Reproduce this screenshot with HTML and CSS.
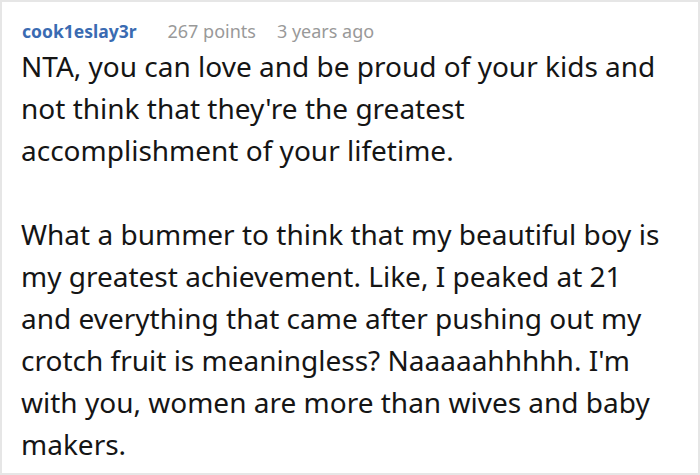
FILE: index.html
```html
<!DOCTYPE html>
<html>
<head>
<meta charset="utf-8">
<link rel="stylesheet" href="styles.css">
</head>
<body>
<div class="comment">
  <div class="meta">
    <span class="author">cook1eslay3r</span>
    <span class="points">267 points</span>
    <span class="time">3 years ago</span>
  </div>
  <div class="body">
    <p>NTA, you can love and be proud of your kids and not think that they're the greatest accomplishment of your lifetime.</p>
    <p>What a bummer to think that my beautiful boy is my greatest achievement. Like, I peaked at 21 and everything that came after pushing out my crotch fruit is meaningless? Naaaaahhhhh. I'm with you, women are more than wives and baby makers.</p>
  </div>
</div>
</body>
</html>
```

FILE: styles.css
```css
html, body {
  margin: 0;
  padding: 0;
  background: #ffffff;
}
.comment {
  width: 700px;
  height: 475px;
  box-sizing: border-box;
  border: 2px solid #e6e6e6;
  padding: 17px 0 0 19px;
  font-family: "Noto Sans", "Open Sans", sans-serif;
  overflow: hidden;
}
.meta {
  display: flex;
  align-items: baseline;
  line-height: 24px;
  padding-left: 1px;
}
.author {
  color: #3a6bb2;
  font-weight: bold;
  font-size: 17.5px;
}
.points, .time {
  color: #999999;
  font-size: 18px;
}
.points {
  margin-left: 31px;
}
.time {
  margin-left: 21px;
}
.body {
  width: 640px;
  font-size: 28px;
  line-height: 42px;
  color: #151515;
  margin-top: 2px;
}
.body p {
  margin: 0 0 42px 0;
}
```
